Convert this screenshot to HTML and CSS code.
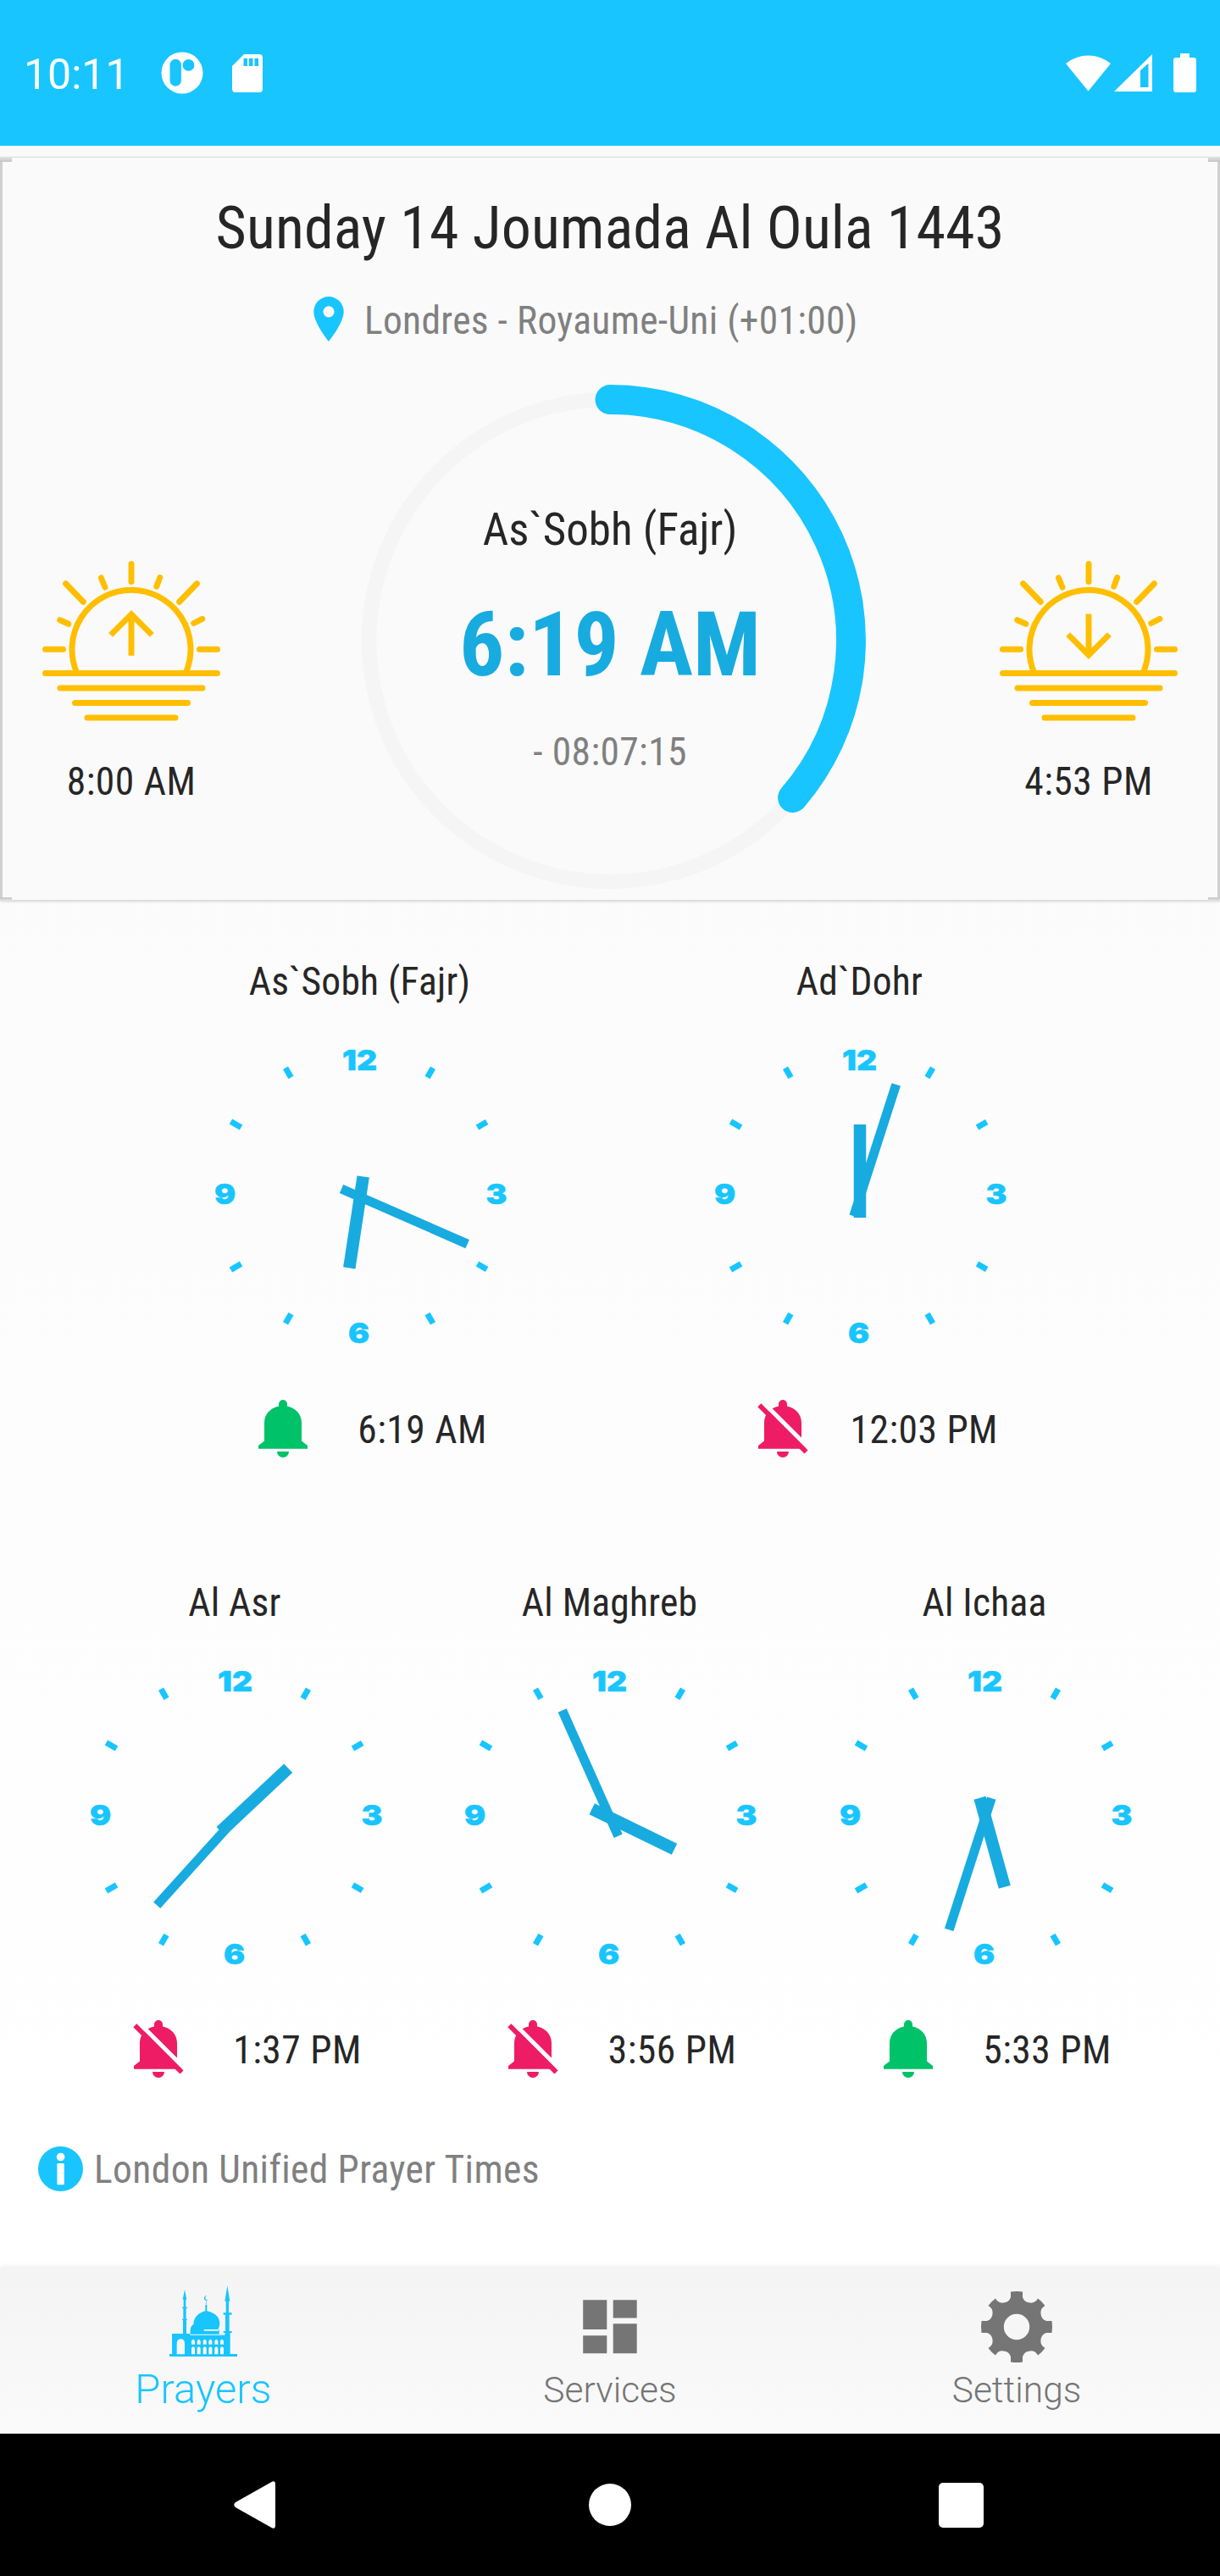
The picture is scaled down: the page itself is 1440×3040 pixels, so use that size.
FILE: index.html
```html
<!DOCTYPE html>
<html lang="en">
<head>
<meta charset="utf-8">
<title>Prayer times</title>
<link rel="stylesheet" href="styles.css">
</head>
<body>
<svg class="defs" width="0" height="0" aria-hidden="true">
  <defs>
    <g id="face">
      <g id="ticks" stroke="#18c5ff" stroke-width="7">
        <path d="M0-161V-174" transform="rotate(30)"/><path d="M0-161V-174" transform="rotate(60)"/>
        <path d="M0-161V-174" transform="rotate(120)"/><path d="M0-161V-174" transform="rotate(150)"/>
        <path d="M0-161V-174" transform="rotate(210)"/><path d="M0-161V-175" transform="rotate(240)"/>
        <path d="M0-161V-175" transform="rotate(300)"/><path d="M0-161V-174" transform="rotate(330)"/>
      </g>
    </g>
    <path id="bell" d="M24 7.4V5a5 5 0 0 1 10 0V7.4C44 9.500 51 17 51 27V48.400L58 53.900V57.700H0V53.900L7 48.400V27C7 17 14 9.500 24 7.400ZM22 61H36A7 7 0 0 1 22 61Z"/>
    <mask id="slashGap"><rect x="-5" y="-5" width="70" height="80" fill="#fff"/><path d="M-2.250-5L67.750 65" stroke="#000" stroke-width="5.200"/></mask>
    <g id="bellOff"><use href="#bell" mask="url(#slashGap)"/><path d="M1.300 6.300L56.500 61.500" stroke="currentColor" stroke-width="5.800"/></g>
    <g id="sun" fill="none" stroke="#ffbf00" stroke-width="7" stroke-linecap="round">
      <path d="M105 4.500V25.500M27.600 27.700L48.300 49.200M182.400 27.700L161.700 49.200M69.400 21L74 32M138.700 20.600L134.800 31.100M20.700 70.700L30.800 75.300M188.800 69.400L178.700 74.500M3.500 105.200H24.500M185.500 105.200H206.500"/>
      <path d="M40.900 133.400A70 70 0 1 1 169.100 133.400" stroke-linecap="butt"/>
      <path d="M3.500 133.400H206.500M21 151H189M38.500 168.500H171.500M53 186H157"/>
    </g>
  </defs>
</svg>

<div class="app">
  <header class="status">
    <span class="status-time">10:11</span>
    <svg class="status-app" width="50" height="50" viewBox="0 0 50 50"><path fill="#fff" fill-rule="evenodd" d="M25 .5a24.500 24.500 0 1 1 0 49a24.500 24.500 0 1 1 0-49ZM10.500 15.500V34a6.700 6.700 0 0 0 13.400 0V15.500a6.700 6.700 0 0 0-13.400 0ZM32.500 9a6.900 6.900 0 1 0 0 13.800a6.900 6.900 0 1 0 0-13.800Z"/></svg>
    <svg class="status-sd" width="36" height="45" viewBox="0 0 36 45"><path fill="#fff" fill-rule="evenodd" d="M14 0H32a4 4 0 0 1 4 4V41a4 4 0 0 1-4 4H4a4 4 0 0 1-4-4V14ZM13.500 4.700V14H18V4.700ZM20 4.700V14H24.500V4.700ZM26.500 4.700V14H31V4.700Z"/></svg>
    <svg class="status-right" width="154" height="46" viewBox="1258 63 154 46"><g fill="#fff"><path d="M1284.500 107.500L1258 75A42 42 0 0 1 1311 75Z"/><path fill-rule="evenodd" d="M1315 108L1360 64V108ZM1346 83V103H1355.500V74.700Z"/><path d="M1393 63H1404V68H1409a3 3 0 0 1 3 3V106a3 3 0 0 1-3 3H1388a3 3 0 0 1-3-3V71a3 3 0 0 1 3-3H1393Z"/></g></svg>
  </header>

  <main class="content">
    <section class="card">
      <h1 class="date">Sunday 14 Joumada Al Oula 1443</h1>
      <div class="place">
        <svg width="36" height="53" viewBox="0 0 36 53"><path fill="#18c5ff" fill-rule="evenodd" d="M18 0A17.700 17.700 0 0 1 35.700 18C35.700 31 18 53 18 53S.3 31 .3 18A17.700 17.700 0 0 1 18 0ZM18 11.200a6.600 6.600 0 1 0 0 13.200a6.600 6.600 0 1 0 0-13.200Z"/></svg>
        <span>Londres - Royaume-Uni (+01:00)</span>
      </div>
      <div class="hero">
        <div class="sun">
          <svg width="210" height="190" viewBox="0 0 210 190"><use href="#sun"/><path d="M105 112.800V64M80.600 88.400L105 64L129.400 88.400" fill="none" stroke="#ffbf00" stroke-width="7"/></svg>
          <span>8:00 AM</span>
        </div>
        <div class="next">
          <svg class="ring" width="604" height="604" viewBox="-302 -302 604 604" fill="none"><circle r="284.400" stroke="#f5f5f5" stroke-width="17.500"/><path d="M0-284.400A284.400 284.400 0 0 1 215.600 185.500" stroke="#18c5ff" stroke-width="35" stroke-linecap="round"/></svg>
          <div class="next-text">
            <span class="next-name">As`Sobh (Fajr)</span>
            <strong class="next-time">6:19 AM</strong>
            <span class="next-left">- 08:07:15</span>
          </div>
        </div>
        <div class="sun">
          <svg width="210" height="190" viewBox="0 0 210 190"><use href="#sun"/><path d="M105 63.500V112M80.600 87.600L105 112L129.400 87.600" fill="none" stroke="#ffbf00" stroke-width="7"/></svg>
          <span>4:53 PM</span>
        </div>
      </div>
    </section>

    <section class="prayers">
      <div class="row row-two">
        <article class="prayer">
          <h2>As`Sobh (Fajr)</h2>
          <svg class="clock" viewBox="-180 -180 360 360"><use href="#face"/><text x="0.500" y="-148">12</text><text x="162" y="9.500">3</text><text x="-0.500" y="174">6</text><text x="-158.500" y="9.500">9</text><path class="hour" d="M4.700-22.500L-11.700 85.300"/><path class="minute" d="M-21-8L127.700 57.100"/></svg>
          <div class="alarm"><svg class="on" viewBox="-1 0 60 68"><use href="#bell"/></svg><span>6:19 AM</span></div>
        </article>
        <article class="prayer">
          <h2>Ad`Dohr</h2>
          <svg class="clock" viewBox="-180 -180 360 360"><use href="#face"/><text x="0.500" y="-148">12</text><text x="162" y="9.500">3</text><text x="-0.500" y="174">6</text><text x="-158.500" y="9.500">9</text><path class="hour" d="M1-84V26"/><path class="minute" d="M43.700-131.100L-6.300 24.200"/></svg>
          <div class="alarm"><svg class="off" viewBox="-1 0 60 68"><use href="#bellOff"/></svg><span>12:03 PM</span></div>
        </article>
      </div>
      <div class="row row-three">
        <article class="prayer">
          <h2>Al Asr</h2>
          <svg class="clock" viewBox="-180 -180 360 360"><use href="#face"/><text x="0.500" y="-148">12</text><text x="162" y="9.500">3</text><text x="-0.500" y="174">6</text><text x="-158.500" y="9.500">9</text><path class="hour" d="M63.200-57.300L-16.500 17.400"/><path class="minute" d="M-91.800 104.400L17.500-16.400"/></svg>
          <div class="alarm"><svg class="off" viewBox="-1 0 60 68"><use href="#bellOff"/></svg><span>1:37 PM</span></div>
        </article>
        <article class="prayer">
          <h2>Al Maghreb</h2>
          <svg class="clock" viewBox="-180 -180 360 360"><use href="#face"/><text x="0.500" y="-148">12</text><text x="162" y="9.500">3</text><text x="-0.500" y="174">6</text><text x="-158.500" y="9.500">9</text><path class="hour" d="M-20.300-9.300L77 38.300"/><path class="minute" d="M-55.300-125.400L10.700 22.700"/></svg>
          <div class="alarm"><svg class="off" viewBox="-1 0 60 68"><use href="#bellOff"/></svg><span>3:56 PM</span></div>
        </article>
        <article class="prayer">
          <h2>Al Ichaa</h2>
          <svg class="clock" viewBox="-180 -180 360 360"><use href="#face"/><text x="0.500" y="-148">12</text><text x="162" y="9.500">3</text><text x="-0.500" y="174">6</text><text x="-158.500" y="9.500">9</text><path class="hour" d="M-5.500-22.300L23.800 82.900"/><path class="minute" d="M8.200-21.900L-41.800 133.400"/></svg>
          <div class="alarm"><svg class="on" viewBox="-1 0 60 68"><use href="#bell"/></svg><span>5:33 PM</span></div>
        </article>
      </div>
    </section>

    <div class="source">
      <svg width="53" height="53" viewBox="0 0 53 53"><circle cx="26.500" cy="26.500" r="26.500" fill="#18c5ff"/><circle cx="26.600" cy="12.500" r="4.800" fill="#fff"/><rect x="22.400" y="20" width="8.400" height="25.200" rx="1" fill="#fff"/></svg>
      <span>London Unified Prayer Times</span>
    </div>
  </main>

  <nav class="tabs">
    <a class="tab active">
      <svg width="120" height="114" viewBox="0 18 360 342" fill="#18c5ff">
        <path fill-rule="evenodd" d="M60 333V324H69V252H108V204H105V200H109V162H105V158H110V131H107L114 96L121 131H118V158H123V162H119V200H123V204H120V252H134V248Q132 226 145 219Q146 184 187 172V158H189V138H191V158H193V172Q236 182 238 214Q238 228 232 238H236V254H257V249H251V243H258V185H251V178H260V137H256L265 82L274 137H270V178H281V185H272V243H281V249H275V324H300V333ZM86 325H114V288Q114 271 100 271Q86 271 86 288Z"/>
        <path d="M199 133A9.500 9.500 0 1 1 193 117A8 8 0 0 0 199 133Z"/>
        <circle cx="190" cy="155" r="4"/>
        <g fill="#f7f7f7"><path d="M182 237H234V242H182ZM132 254H256V257H132Z"/>
        <path d="M138 290V278Q144 267 150 278V290ZM158 290V278Q164 267 170 278V290ZM179 290V278Q185 267 191 278V290ZM199 290V278Q205 267 211 278V290ZM220 290V278Q226 267 232 278V290ZM240 290V278Q246 267 252 278V290Z"/>
        <path d="M138 325V303Q144 292 150 303V325ZM158 325V303Q164 292 170 303V325ZM179 325V303Q185 292 191 303V325ZM199 325V303Q205 292 211 303V325ZM220 325V303Q226 292 232 303V325ZM240 325V303Q246 292 252 303V325Z"/></g>
      </svg>
      <span>Prayers</span>
    </a>
    <a class="tab">
      <svg width="120" height="114" viewBox="0 0 120 114" fill="#757575"><path d="M28.200 38.200H56.300V73H28.200ZM28.200 80.200H56.300V101.300H28.200ZM63.700 38.200H91.700V59.400H63.700ZM63.700 66.200H91.700V101.300H63.700Z"/></svg>
      <span>Services</span>
    </a>
    <a class="tab">
      <svg width="120" height="114" viewBox="-60 -70 120 114"><path fill="#757575" fill-rule="evenodd" d="M-7-41.500Q0-42.500 7-41.500V-35Q9-28.800 16-28.400Q22-28 25-33.500Q30-30 33.500-25Q28-22 28.400-16Q28.800-9 35-7H41.500Q42.500 0 41.500 7H35Q28.800 9 28.400 16Q28 22 33.500 25Q30 30 25 33.500Q22 28 16 28.400Q9 28.800 7 35V41.500Q0 42.500-7 41.500V35Q-9 28.800-16 28.400Q-22 28-25 33.500Q-30 30-33.500 25Q-28 22-28.400 16Q-28.800 9-35 7H-41.500Q-42.500 0-41.500-7H-35Q-28.800-9-28.400-16Q-28-22-33.500-25Q-30-30-25-33.500Q-22-28-16-28.400Q-9-28.800-7-35ZM0-15.200A15.200 15.200 0 1 0 0 15.200A15.200 15.200 0 1 0 0-15.200Z"/></svg>
      <span>Settings</span>
    </a>
  </nav>

  <footer class="sysnav">
    <svg width="49" height="56" viewBox="0 0 49 56"><path fill="#fff" d="M45 .8Q49-1 49 4V52Q49 57 45 55.200L2 31Q-1.500 28 2 25Z"/></svg>
    <svg width="50" height="50" viewBox="0 0 50 50"><circle cx="25" cy="25" r="25" fill="#fff"/></svg>
    <svg width="53" height="53" viewBox="0 0 53 53"><rect width="53" height="53" rx="5" fill="#fff"/></svg>
  </footer>
</div>
</body>
</html>
```
FILE: styles.css
```css
* { box-sizing: border-box; }
body {
  margin: 0;
  font-family: "Roboto Condensed", Roboto, sans-serif;
  font-stretch: 75%;
  color: #262626;
}
svg { display: block; flex: none; overflow: visible; }
.defs { position: absolute; }
h1, h2 { margin: 0; font-weight: 400; }
span, h1, h2 { white-space: nowrap; }

.app { width: 1440px; height: 3040px; display: flex; flex-direction: column; }

.status {
  height: 172px;
  padding: 0 28px;
  display: flex;
  align-items: flex-start;
  background: #18c5ff;
  color: #fff;
  font-family: Roboto, sans-serif;
  font-stretch: 100%;
}
.status-time { width: 162px; padding-top: 58px; font-size: 50px; line-height: 60px; }
.status-app { margin-top: 61px; }
.status-sd { margin: 64px 0 0 34px; }
.status-right { margin: 63px 0 0 auto; }

.content {
  flex: 1;
  padding-top: 14px;
  background: linear-gradient(#fafafa, #fff);
}

.card {
  position: relative;
  height: 876px;
  padding-top: 43px;
  border: solid #d0d0d0;
  border-width: 0 3px;
  background: #fafafa;
  box-shadow: 0 -1px 1px #ddd, 0 2px 3px #d4d4d4;
}
/* shaded corners of the card outline */
.card::before,
.card::after {
  content: "";
  position: absolute;
  left: -3px;
  right: -3px;
  background:
    linear-gradient(#e4e4e4, #c4c4c4) left / 14px 100% no-repeat,
    linear-gradient(#e4e4e4, #c4c4c4) right / 14px 100% no-repeat;
}
.card::before { top: -1px; height: 6px; }
.card::after { bottom: -1px; height: 4px; transform: scaleY(-1); }
.date { font-size: 70px; line-height: 80px; letter-spacing: 0.100px; text-align: center; }
.place {
  height: 54px;
  margin-top: 41px;
  padding-left: 367px;
  display: flex;
  gap: 24px;
  font-size: 45.500px;
  line-height: 57px;
  letter-spacing: 0.320px;
  color: #808080;
}
.hero {
  margin-top: 50px;
  padding: 0 47px;
  display: flex;
  justify-content: space-between;
}
.sun {
  width: 210px;
  padding-top: 207px;
  display: flex;
  flex-direction: column;
  align-items: center;
  gap: 45px;
  font-size: 45.500px;
  line-height: 54px;
  letter-spacing: 0.500px;
}
.next { display: grid; }
.next > * { grid-area: 1 / 1; }
.next-text {
  padding-top: 141px;
  display: flex;
  flex-direction: column;
  align-items: center;
}
.next-name { font-size: 53px; line-height: 60px; }
.next-time { margin-top: 46px; font-size: 105.500px; line-height: 120px; font-weight: 700; color: #18abe0; white-space: nowrap; }
.next-left { margin-top: 40px; font-size: 45.500px; line-height: 54px; letter-spacing: 0.400px; color: #808080; }

.prayers { padding-top: 70px; display: flex; flex-direction: column; gap: 144.500px; }
.row { display: grid; justify-content: center; justify-items: center; }
.row-two { grid-template-columns: repeat(2, 590px); margin-left: -2px; }
.row-three { grid-template-columns: repeat(3, 442.500px); margin-left: -2px; }
.prayer { width: 360px; }
.prayer h2 { padding-left: 1px; font-size: 45.500px; line-height: 54px; letter-spacing: 0.250px; text-align: center; }
.clock { width: 360px; height: 360px; margin-top: 45px; }
.clock text {
  font: 900 33px Inter, sans-serif;
  fill: #18c5ff;
  stroke: #18c5ff;
  stroke-width: 0.500px;
  text-anchor: middle;
  transform-box: fill-box;
  transform-origin: center;
  transform: scaleX(1.13);
}
.hour { stroke: #18abe0; stroke-width: 14.500px; }
.minute { stroke: #18abe0; stroke-width: 11px; }
.alarm {
  height: 68px;
  margin-top: 61px;
  padding-left: 60px;
  display: flex;
  font-size: 45.500px;
  line-height: 71px;
  letter-spacing: 0.500px;
}
.row-three .alarm { margin-top: 60px; margin-bottom: 1px; }
.alarm svg { width: 60px; height: 68px; fill: currentColor; }
.alarm .on { color: #00c269; }
.alarm .off { color: #ee1c64; }
.alarm span { width: 170px; margin-left: 49.500px; text-align: center; }

.source {
  margin-top: 80px;
  padding-left: 45px;
  display: flex;
  gap: 13px;
  font-size: 45.500px;
  line-height: 56px;
  letter-spacing: 0.400px;
  color: #808080;
}

.tabs {
  height: 196px;
  display: grid;
  grid-template-columns: repeat(3, 1fr);
  background: linear-gradient(#f4f4f4, #fafafa);
  box-shadow: 0 -3px 4px #f4f4f4;
  font-family: Roboto, sans-serif;
  font-stretch: 100%;
  font-weight: 300;
}
.tab {
  display: flex;
  flex-direction: column;
  align-items: center;
  color: #757575;
  font-size: 42.500px;
  line-height: 61px;
}
.tab.active { color: #18c5ff; font-size: 49px; line-height: 60px; }

.sysnav {
  height: 168px;
  padding-left: 276px;
  display: flex;
  align-items: center;
  background: #000;
}
.sysnav svg:nth-child(2) { margin-left: 370px; }
.sysnav svg:nth-child(3) { margin-left: 363.400px; }
```
